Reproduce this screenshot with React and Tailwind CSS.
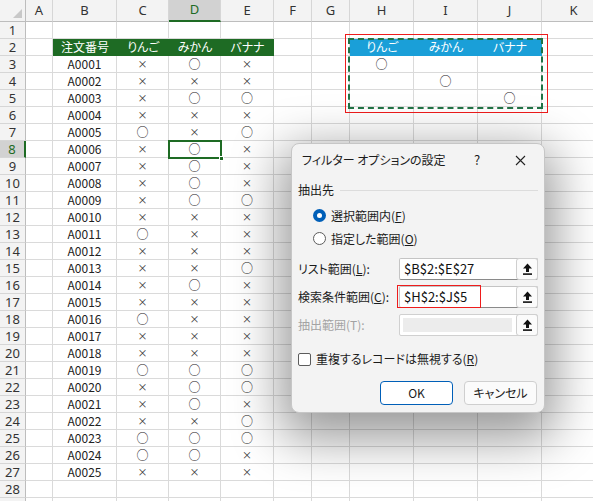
import React from 'react';

const COLS = [
  { k: 'A', w: 27 },
  { k: 'B', w: 64 },
  { k: 'C', w: 52 },
  { k: 'D', w: 52 },
  { k: 'E', w: 53 },
  { k: 'F', w: 38 },
  { k: 'G', w: 38 },
  { k: 'H', w: 64 },
  { k: 'I', w: 64 },
  { k: 'J', w: 64 },
  { k: 'K', w: 64 },
];

// o = ○, x = ×
const ORDERS = [
  'xox', 'xxx', 'xoo', 'xxx', 'oxo', 'xox', 'xox', 'xox', 'xoo', 'xxx',
  'oxx', 'xxx', 'xxo', 'xox', 'xxx', 'oxx', 'xxx', 'xxx', 'ooo', 'xoo',
  'xox', 'xxo', 'ooo', 'oox', 'xxx',
];

function getCell(row, col) {
  if (row === 2) {
    const green = { B: '注文番号', C: 'りんご', D: 'みかん', E: 'バナナ' };
    const blue = { H: 'りんご', I: 'みかん', J: 'バナナ' };
    if (green[col]) return { text: green[col], fill: 'green' };
    if (blue[col]) return { text: blue[col], fill: 'blue' };
  }
  if (row >= 3 && row <= 27) {
    const i = row - 3;
    if (col === 'B') return { text: 'A' + String(i + 1).padStart(4, '0') };
    const idx = { C: 0, D: 1, E: 2 }[col];
    if (idx !== undefined) return { mark: ORDERS[i][idx] };
  }
  if (row === 3 && col === 'H') return { mark: 'o' };
  if (row === 4 && col === 'I') return { mark: 'o' };
  if (row === 5 && col === 'J') return { mark: 'o' };
  return null;
}

function Cell({ row, col }) {
  const c = getCell(row, col.k);
  let cls = 'border-r border-b border-[#dadada] bg-white text-[#222]';
  if (c?.fill === 'green') cls = 'border-b border-[#1e6b24] bg-[#1e6b24] text-white';
  if (c?.fill === 'blue') cls = 'border-b border-[#1a9fd8] bg-[#1a9fd8] text-white';
  return (
    <div
      className={`shrink-0 h-full flex items-center justify-center leading-none text-[12px] ${cls}`}
      style={{ width: col.w }}
    >
      {c?.text}
      {c?.mark === 'o' && <span className="text-[12px]">○</span>}
      {c?.mark === 'x' && <span className="text-[10px] text-[#333]">×</span>}
    </div>
  );
}

function UpArrow() {
  return (
    <svg width="11" height="12" viewBox="0 0 11 12">
      <path d="M5.5 0.5 L10 5.5 H7 V9 H4 V5.5 H1 Z" fill="#111" />
      <rect x="1" y="10.3" width="9" height="1.6" fill="#111" />
    </svg>
  );
}

function RangeInput({ value, disabled }) {
  return (
    <div className={`w-[139px] h-[22px] flex bg-white border rounded-[2px] ${disabled ? 'border-[#d0d0d0]' : 'border-[#c4c4c4] border-b-[#8a8a8a]'}`}>
      <div className={`flex-1 flex items-center pl-[4px] text-[13px] text-[#111] ${disabled ? 'bg-[#ececec] m-[3px] mr-[4px]' : ''}`}>
        {value}
      </div>
      <div className="w-[22px] -my-px -mr-px flex items-center justify-center bg-[#fbfbfb] border border-[#cfcfcf] rounded-[3px]">
        <UpArrow />
      </div>
    </div>
  );
}

function Dialog() {
  return (
    <div
      className="absolute left-[291px] top-[143px] w-[254px] h-[270px] bg-[#f3f3f3] border border-[#c6c6c6] rounded-[8px] shadow-[0_16px_50px_10px_rgba(0,0,0,0.4)] text-[12px] text-[#1b1b1b] [font-feature-settings:'palt']"
      style={{ fontFamily: '"Noto Sans CJK JP", "Noto Sans", sans-serif' }}
    >
      <div className="h-[32px] flex items-center pl-[10px] pr-[12px]">
        <span className="flex-1 text-[12px]">フィルター オプションの設定</span>
        <span className="w-[12px] text-center text-[13px] mr-[32px]">?</span>
        <svg width="11" height="11" viewBox="0 0 11 11" className="mr-[6px]">
          <path d="M1 1 L10 10 M10 1 L1 10" stroke="#222" strokeWidth="1.1" />
        </svg>
      </div>

      <div className="px-[6px]">
        <div className="mt-[5px] h-[18px] flex items-center gap-[6px]">
          <span>抽出先</span>
          <div className="flex-1 h-px bg-[#dcdcdc]" />
        </div>

        <div className="mt-[5px] pl-[15px]">
          <div className="h-[23px] flex items-center gap-[5px]">
            <div className="w-[13px] h-[13px] rounded-full bg-[#005fb8] flex items-center justify-center">
              <div className="w-[5px] h-[5px] rounded-full bg-white" />
            </div>
            <span>選択範囲内(<span className="underline">F</span>)</span>
          </div>
          <div className="h-[23px] flex items-center gap-[5px]">
            <div className="w-[13px] h-[13px] rounded-full border border-[#5c5c5c] bg-white" />
            <span>指定した範囲(<span className="underline">O</span>)</span>
          </div>
        </div>

        <div className="mt-[8px] flex flex-col gap-[6px]">
          <div className="flex items-center justify-between">
            <span>リスト範囲(<span className="underline">L</span>):</span>
            <RangeInput value="$B$2:$E$27" />
          </div>
          <div className="flex items-center justify-between">
            <span>検索条件範囲(<span className="underline">C</span>):</span>
            <RangeInput value="$H$2:$J$5" />
          </div>
          <div className="flex items-center justify-between text-[#a3a3a3]">
            <span>抽出範囲(T):</span>
            <RangeInput disabled />
          </div>
        </div>

        <div className="mt-[13px] h-[20px] flex items-center gap-[5px]">
          <div className="w-[13px] h-[13px] rounded-[2px] border border-[#5c5c5c] bg-white" />
          <span>重複するレコードは無視する(<span className="underline">R</span>)</span>
        </div>

        <div className="mt-[12px] flex justify-end gap-[11px] pr-[1px]">
          <button className="w-[73px] h-[24px] bg-white border border-[#005fb8] rounded-[4px] text-[12px]">OK</button>
          <button className="w-[73px] h-[24px] bg-[#fbfbfb] border border-[#cfcfcf] rounded-[4px] text-[12px]">キャンセル</button>
        </div>
      </div>

      {/* red highlight around criteria range */}
      <div className="absolute left-[105px] top-[141px] w-[84px] h-[23px] border-[1.5px] border-[#ee1c1c]" />
    </div>
  );
}

export default function App() {
  const rows = Array.from({ length: 29 }, (_, i) => i + 1);
  return (
    <div
      className="relative w-[593px] h-[501px] overflow-hidden bg-white select-none [font-feature-settings:'palt']"
      style={{ fontFamily: '"Noto Sans CJK JP", "Noto Sans", sans-serif' }}
    >
      {/* column headers */}
      <div className="flex h-[22px]">
        <div className="relative shrink-0 w-[26px] h-full bg-[#f3f3f3] border-r border-b border-[#bdbdbd]">
          <div className="absolute right-[3px] bottom-[3px] w-0 h-0 border-l-[9px] border-l-transparent border-b-[9px] border-b-[#c8c8c8]" />
        </div>
        {COLS.map((c) => (
          <div
            key={c.k}
            className={`shrink-0 h-full flex items-center justify-center text-[13px] border-r border-[#d6d6d6] ${
              c.k === 'D'
                ? 'bg-[#d2d2d2] text-[#1e6b24] border-b-2 border-b-[#1e6b24]'
                : 'bg-[#f3f3f3] text-[#333] border-b border-b-[#bdbdbd]'
            }`}
            style={{ width: c.w, fontFamily: '"Noto Sans", sans-serif' }}
          >
            {c.k}
          </div>
        ))}
      </div>

      {rows.map((r) => (
        <div key={r} className="flex h-[17px]">
          <div
            className={`shrink-0 w-[26px] h-full flex items-center justify-center text-[13px] leading-none border-b border-[#d6d6d6] ${
              r === 8
                ? 'bg-[#d2d2d2] text-[#1e6b24] border-r-2 border-r-[#1e6b24]'
                : 'bg-[#f3f3f3] text-[#333] border-r border-r-[#bdbdbd]'
            }`}
            style={{ fontFamily: '"Noto Sans", sans-serif' }}
          >
            {r < 29 ? r : ''}
          </div>
          {COLS.map((c) => (
            <Cell key={c.k} row={r} col={c} />
          ))}
        </div>
      ))}

      {/* active cell D8 */}
      <div className="absolute left-[168px] top-[140px] w-[54px] h-[19px] border-2 border-[#1e6b24]" />
      <div className="absolute left-[219px] top-[156px] w-[5px] h-[5px] bg-[#1e6b24] border border-white" />

      {/* marching ants around criteria */}
      <div className="absolute left-[348px] top-[38px] w-[195px] h-[71px] border-2 border-dashed border-[#217346]" />
      {/* red rectangle */}
      <div className="absolute left-[345px] top-[34px] w-[203px] h-[79px] border-[1.5px] border-[#ee1c1c]" />

      <Dialog />
    </div>
  );
}
